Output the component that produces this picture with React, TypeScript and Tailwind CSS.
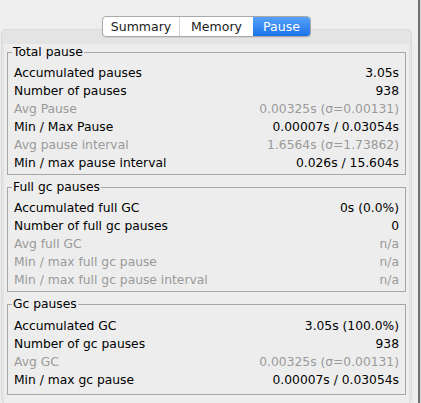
type Row = { label: string; value: string; dim?: boolean };

const totalPause: Row[] = [
  { label: "Accumulated pauses", value: "3.05s" },
  { label: "Number of pauses", value: "938" },
  { label: "Avg Pause", value: "0.00325s (σ=0.00131)", dim: true },
  { label: "Min / Max Pause", value: "0.00007s / 0.03054s" },
  { label: "Avg pause interval", value: "1.6564s (σ=1.73862)", dim: true },
  { label: "Min / max pause interval", value: "0.026s / 15.604s" },
];

const fullGc: Row[] = [
  { label: "Accumulated full GC", value: "0s (0.0%)" },
  { label: "Number of full gc pauses", value: "0" },
  { label: "Avg full GC", value: "n/a", dim: true },
  { label: "Min / max full gc pause", value: "n/a", dim: true },
  { label: "Min / max full gc pause interval", value: "n/a", dim: true },
];

const gcPauses: Row[] = [
  { label: "Accumulated GC", value: "3.05s (100.0%)" },
  { label: "Number of gc pauses", value: "938" },
  { label: "Avg GC", value: "0.00325s (σ=0.00131)", dim: true },
  { label: "Min / max gc pause", value: "0.00007s / 0.03054s" },
];

function Group({ title, rows, className = "" }: { title: string; rows: Row[]; className?: string }) {
  return (
    <div className={`relative border border-[#a6a6a6] pt-[11px] px-[6px] ${className}`}>
      <span className="absolute -top-[8px] left-[4px] bg-[#ededed] px-[1px] leading-[14px] text-black">
        {title}
      </span>
      {rows.map((r) => (
        <div
          key={r.label}
          className={`flex h-[18px] items-center justify-between ${r.dim ? "text-[#9a9a9a]" : "text-black"}`}
        >
          <span>{r.label}</span>
          <span>{r.value}</span>
        </div>
      ))}
    </div>
  );
}

export default function App() {
  return (
    <div
      className="flex h-[403px] w-[421px] bg-[#eeeeee] text-[12.3px]"
      style={{ fontFamily: '"DejaVu Sans", "Liberation Sans", sans-serif' }}
    >
      <div className="relative w-[418px] pt-[29px]">
        {/* tabs */}
        <div className="absolute left-[102px] top-[16px] z-10 flex h-[21px] overflow-hidden rounded-[4px] border border-[#a9a9a9] bg-white text-[12.5px] leading-[19px] shadow-[0_1px_1px_rgba(0,0,0,0.08)]">
          <div className="w-[77px] border-r border-[#d4d4d4] text-center text-[#1a1a1a]">Summary</div>
          <div className="w-[73px] text-center text-[#1a1a1a]">Memory</div>
          <div className="w-[57px] bg-gradient-to-b from-[#56a2f8] to-[#1872ea] text-center text-white">Pause</div>
        </div>

        {/* tab panel */}
        <div className="ml-[1px] w-[411px] rounded-[5px] border border-[#d9d9d9] bg-[#e4e4e4]">
          <div className="h-[14px]" />
          <div className="mx-[2px] flex flex-col gap-[12px] bg-[#ededed] px-[3px] pt-[8px] pb-[8px]">
            <Group title="Total pause" rows={totalPause} className="pb-[2px]" />
            <Group title="Full gc pauses" rows={fullGc} className="pb-[2px]" />
            <Group title="Gc pauses" rows={gcPauses} className="pt-[12px] pb-[5px]" />
          </div>
        </div>
      </div>
      <div className="w-[2px] bg-[#6f6f6f]" />
      <div className="w-[1px] bg-[#d6d6d6]" />
    </div>
  );
}
